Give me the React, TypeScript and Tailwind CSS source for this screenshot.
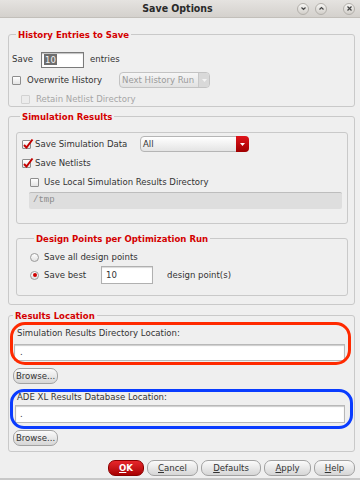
import React from 'react';

function CheckBox({ checked = false, disabled = false }: { checked?: boolean; disabled?: boolean }) {
  return (
    <span
      className={`relative inline-block w-[9px] h-[9px] rounded-[1px] border flex-shrink-0 ${
        disabled ? 'border-[#d2d2d2] bg-[#ececec]' : 'border-[#8e8e8e] bg-gradient-to-b from-[#ffffff] to-[#e4e4e4]'
      }`}
    >
      {checked && (
        <svg className="absolute left-[-1px] top-[-3px]" width="12" height="12" viewBox="0 0 12 12">
          <path d="M2 7 L4.5 9.5 L10.5 1.5" fill="none" stroke="#c40000" strokeWidth="2" />
        </svg>
      )}
    </span>
  );
}

function Radio({ on = false }: { on?: boolean }) {
  return (
    <span className="relative inline-flex items-center justify-center w-[9px] h-[9px] rounded-full border border-[#9a9a9a] bg-gradient-to-b from-[#ffffff] to-[#e2e2e2] flex-shrink-0">
      {on && <span className="w-[4px] h-[4px] rounded-full bg-[#d00000]" />}
    </span>
  );
}

function TitleIcon({ kind }: { kind: 'down' | 'up' | 'close' }) {
  return (
    <span className="w-[12px] h-[12px] rounded-full border border-[#b3b0ab] bg-gradient-to-b from-[#f6f5f3] to-[#d2cfca] flex items-center justify-center">
      <svg width="7" height="7" viewBox="0 0 7 7">
        {kind === 'down' && <path d="M1.5 2.5 L3.5 4.5 L5.5 2.5" fill="none" stroke="#444" strokeWidth="1.2" />}
        {kind === 'up' && <path d="M1.5 4.5 L3.5 2.5 L5.5 4.5" fill="none" stroke="#444" strokeWidth="1.2" />}
        {kind === 'close' && <path d="M1.5 1.5 L5.5 5.5 M5.5 1.5 L1.5 5.5" fill="none" stroke="#444" strokeWidth="1.2" />}
      </svg>
    </span>
  );
}

function Button({ label, u, w, primary = false }: { label: string; u: number; w: number; primary?: boolean }) {
  return (
    <button
      style={{ width: w }}
      className={`h-[16px] rounded-[7px] border flex items-center justify-center leading-none ${
        primary
          ? 'border-[#8a0000] bg-gradient-to-b from-[#e8262b] to-[#a80000] text-white font-bold'
          : 'border-[#a2a2a2] bg-gradient-to-b from-[#fbfbfb] to-[#d6d6d6] text-[#333]'
      }`}
    >
      {label.slice(0, u)}
      <span className="underline">{label[u]}</span>
      {label.slice(u + 1)}
    </button>
  );
}

function Legend({ children }: { children: React.ReactNode }) {
  return <legend className="ml-[4px] px-[2px] text-[#d40000] font-bold leading-[13px]">{children}</legend>;
}

export default function App() {
  return (
    <div className="w-[360px] h-[480px] bg-[#efefef] flex flex-col text-[9.5px] text-[#333] font-['DejaVu_Sans_Condensed','DejaVu_Sans',sans-serif] overflow-hidden border-b-[2px] border-[#c8c8c8]">
      {/* Title bar */}
      <div className="h-[18px] flex items-center bg-gradient-to-b from-[#e5e3e0] to-[#d4d1cd] border-b border-[#c2bfba] flex-shrink-0">
        <div className="flex-1" />
        <div className="font-bold text-[10.5px] text-[#2a2a2a]">Save Options</div>
        <div className="flex-1 flex items-center justify-end pr-[5px]">
          <TitleIcon kind="down" />
          <span className="w-[6px]" />
          <TitleIcon kind="up" />
          <span className="w-[16px]" />
          <TitleIcon kind="close" />
        </div>
      </div>

      <div className="pl-[8px] pr-[5px] flex flex-col">
        {/* History */}
        <fieldset className="mt-[10px] border border-[#c9c9c9] rounded-[3px] pl-[3px] pr-[6px]">
          <Legend>History Entries to Save</Legend>
          <div className="pt-[7px] flex items-center h-[23px] box-content">
            <span>Save</span>
            <span className="ml-[8px] w-[43px] h-[16px] border border-[#7a7a7a] bg-white flex items-center pl-[2px] shadow-[inset_0_1px_1px_rgba(0,0,0,0.25)]">
              <span className="bg-[#6e6e6e] text-[#f2f2f2] px-[1px] leading-[11px]">10</span>
            </span>
            <span className="ml-[6px]">entries</span>
          </div>
          <div className="mt-[1px] h-[16px] flex items-center">
            <CheckBox />
            <span className="ml-[6px] w-[92px]">Overwrite History</span>
            <span className="w-[91px] h-[16px] rounded-[4px] border border-[#c3c3c3] bg-gradient-to-b from-[#f6f6f6] to-[#e2e2e2] flex items-center text-[#9a9a9a]">
              <span className="flex-1 pl-[2px]">Next History Run</span>
              <span className="w-[11px] h-full border-l border-[#c8c8c8] flex items-center justify-center bg-[#d9d9d9] rounded-r-[3px]">
                <svg width="5" height="3" viewBox="0 0 5 3"><path d="M0 0 L5 0 L2.5 3 Z" fill="#f4f4f4" /></svg>
              </span>
            </span>
          </div>
          <div className="mt-[5px] h-[13px] flex items-center pl-[9px] text-[#a6a6a6]">
            <CheckBox disabled />
            <span className="ml-[6px]">Retain Netlist Directory</span>
          </div>
        </fieldset>

        {/* Simulation Results */}
        <fieldset className="mt-[3px] border border-[#c9c9c9] rounded-[3px] pl-[7px] pr-[6px] pb-[8px]">
          <Legend>Simulation Results</Legend>
          <div className="mt-[9px] border border-[#c9c9c9] rounded-[3px] pl-[5px] pr-[5px] pb-[14px]">
            <div className="mt-[3px] h-[16px] flex items-center">
              <CheckBox checked />
              <span className="ml-[4px] w-[105px]">Save Simulation Data</span>
              <span className="w-[109px] h-[16px] rounded-[4px] border border-[#b5b5b5] bg-gradient-to-b from-[#ffffff] to-[#e4e4e4] flex items-center">
                <span className="flex-1 pl-[2px]">All</span>
                <span className="w-[13px] h-[16px] -mr-px rounded-r-[4px] bg-gradient-to-b from-[#e0141a] to-[#a00000] flex items-center justify-center">
                  <svg width="5" height="3" viewBox="0 0 5 3"><path d="M0 0 L5 0 L2.5 3 Z" fill="#ffffff" /></svg>
                </span>
              </span>
            </div>
            <div className="mt-[3px] h-[16px] flex items-center">
              <CheckBox checked />
              <span className="ml-[4px]">Save Netlists</span>
            </div>
            <div className="mt-[3px] h-[16px] flex items-center pl-[8px]">
              <CheckBox />
              <span className="ml-[5px]">Use Local Simulation Results Directory</span>
            </div>
            <div className="mt-[2px] ml-[7px] h-[17px] rounded-[2px] border-t border-[#bdbdbd] bg-[#dedede] flex items-center pl-[4px] text-[#8c8c8c] font-['Liberation_Mono',monospace] text-[9px]">
              /tmp
            </div>
          </div>

          <fieldset className="mt-[8px] border border-[#c9c9c9] rounded-[3px] pl-[13px] pb-[11px]">
            <Legend>Design Points per Optimization Run</Legend>
            <div className="mt-[5px] h-[14px] flex items-center">
              <Radio />
              <span className="ml-[5px]">Save all design points</span>
            </div>
            <div className="mt-[2px] h-[18px] flex items-center">
              <Radio on />
              <span className="ml-[5px] w-[57px]">Save best</span>
              <span className="w-[52px] h-[18px] border border-[#b0b0b0] bg-white flex items-center pl-[4px] shadow-[inset_0_1px_1px_rgba(0,0,0,0.15)]">10</span>
              <span className="ml-[14px]">design point(s)</span>
            </div>
          </fieldset>
        </fieldset>

        {/* Results Location */}
        <fieldset className="mt-[4px] border border-[#c9c9c9] rounded-[3px] pb-[5px]">
          <Legend>Results Location</Legend>
          <div className="relative pl-[4px] pr-[9px] flex flex-col">
            <div className="mt-[5px] h-[12px] flex items-center pl-[4px]">Simulation Results Directory Location:</div>
            <div className="mt-[5px] ml-[1px] h-[17px] border border-[#b8b8b8] bg-white flex items-center pl-[5px] shadow-[inset_0_1px_1px_rgba(0,0,0,0.2)]">.</div>
            <div className="mt-[7px]"><Button label="Browse..." u={99} w={45} /></div>
            <div className="mt-[7px] h-[12px] flex items-center pl-[4px]">ADE XL Results Database Location:</div>
            <div className="mt-[2px] ml-[2px] h-[18px] border border-[#b8b8b8] bg-white flex items-center pl-[4px] shadow-[inset_0_1px_1px_rgba(0,0,0,0.2)]">.</div>
            <div className="mt-[7px]"><Button label="Browse..." u={99} w={45} /></div>

            {/* annotation outlines */}
            <div className="absolute left-[1px] top-[0px] w-[341px] h-[43px] rounded-[15px] border-[3px] border-[#ff2a00]" />
            <div className="absolute left-[1px] top-[67px] w-[343px] h-[40px] rounded-[14px] border-[3px] border-[#0a3cff]" />
          </div>
        </fieldset>

        {/* Buttons */}
        <div className="mt-[8px] h-[16px] flex items-center justify-end gap-[3px]">
          <Button label="OK" u={0} w={36} primary />
          <Button label="Cancel" u={0} w={51} />
          <Button label="Defaults" u={0} w={60} />
          <Button label="Apply" u={0} w={47} />
          <Button label="Help" u={0} w={41} />
        </div>
      </div>
    </div>
  );
}
